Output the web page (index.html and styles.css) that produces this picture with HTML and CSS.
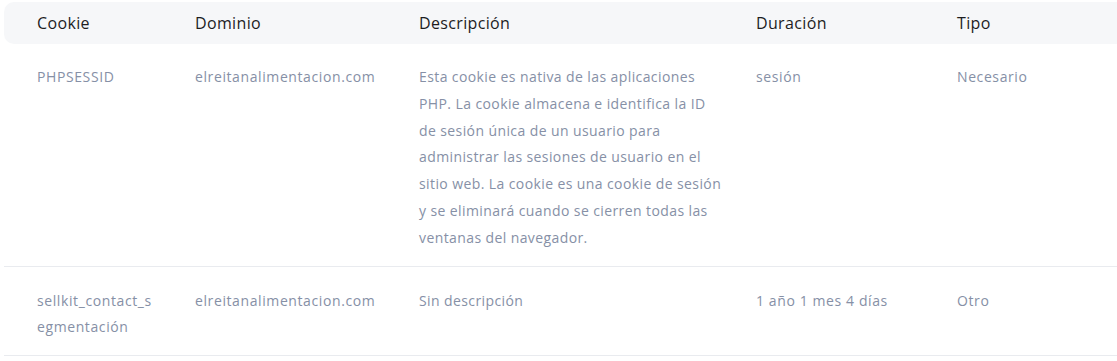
FILE: index.html
```html
<!DOCTYPE html>
<html lang="es">
<head>
<meta charset="utf-8">
<link rel="stylesheet" href="styles.css">
</head>
<body>
<table class="cookies">
  <colgroup>
    <col class="c-name"><col class="c-domain"><col class="c-desc"><col class="c-dur"><col class="c-type">
  </colgroup>
  <thead>
    <tr><th>Cookie</th><th>Dominio</th><th>Descripción</th><th class="dur">Duración</th><th>Tipo</th></tr>
  </thead>
  <tbody>
    <tr>
      <td>PHPSESSID</td>
      <td>elreitanalimentacion.com</td>
      <td class="desc">Esta cookie es nativa de las aplicaciones PHP. La cookie almacena e identifica la ID de sesión única de un usuario para administrar las sesiones de usuario en el sitio web. La cookie es una cookie de sesión y se eliminará cuando se cierren todas las ventanas del navegador.</td>
      <td class="dur">sesión</td>
      <td>Necesario</td>
    </tr>
    <tr>
      <td class="break">sellkit_contact_segmentación</td>
      <td>elreitanalimentacion.com</td>
      <td class="desc">Sin descripción</td>
      <td class="dur">1 año 1 mes 4 días</td>
      <td>Otro</td>
    </tr>
  </tbody>
</table>
</body>
</html>
```

FILE: styles.css
```css
html, body {
  margin: 0;
  padding: 0;
  background: #ffffff;
}
body {
  padding: 2px 0 0 4px;
  font-family: "Open Sans", "Liberation Sans", sans-serif;
}
.cookies {
  width: 1113px;
  border-collapse: separate;
  border-spacing: 0;
  table-layout: fixed;
}
.c-name { width: 158px; }
.c-domain { width: 224px; }
.c-desc { width: 338px; }
.c-dur { width: 200px; }
.c-type { width: auto; }
.cookies th {
  background: #f6f7f9;
  color: #1d1d1f;
  font-weight: 400;
  font-size: 16px;
  letter-spacing: 0.35px;
  text-align: left;
  height: 42px;
  padding: 0 0 0 33px;
  vertical-align: middle;
}
.cookies th:first-child { border-radius: 10px 0 0 10px; }
.cookies td {
  color: #8690a6;
  font-size: 14px;
  letter-spacing: 0.6px;
  line-height: 26.8px;
  padding: 21px 0 16px 33px;
  vertical-align: top;
  border-bottom: 1px solid #e9ebef;
}
.cookies tbody tr:first-child td { padding-top: 20px; padding-bottom: 14px; }
.cookies tbody tr:last-child td { padding-top: 21px; padding-bottom: 14px; }
.cookies td.desc { padding-right: 0; letter-spacing: 0.4px; }
.cookies .dur { padding-left: 32px; }
.cookies td.break { word-break: break-all; padding-right: 7px; }
```
